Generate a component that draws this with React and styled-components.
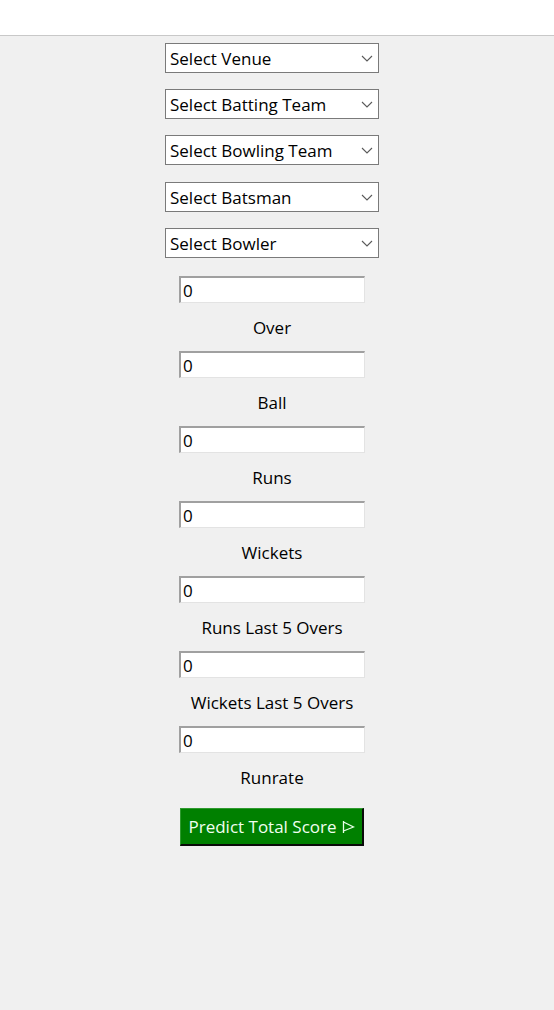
import styled, { createGlobalStyle } from "styled-components";

const GlobalStyle = createGlobalStyle`
  html, body {
    margin: 0;
    padding: 0;
    background: #f0f0f0;
  }
  body {
    font-family: "Open Sans", "Noto Sans", sans-serif;
    color: #000;
  }
`;

const Window = styled.div`
  width: 554px;
  height: 1010px;
  background: #f0f0f0;
  display: flex;
  flex-direction: column;
`;

const TitleBar = styled.div`
  height: 35px;
  background: #fff;
  border-bottom: 1px solid #c8c8c8;
`;

const Form = styled.div`
  display: flex;
  flex-direction: column;
  align-items: center;
  padding: 7px 10px 0 0;
`;

const Combo = styled.div`
  box-sizing: border-box;
  width: 214px;
  height: 30px;
  margin-bottom: ${(p) => (p.$wide ? 17 : 16)}px;
  background: #fff;
  border: 1px solid #7a7a7a;
  display: flex;
  align-items: center;
  justify-content: space-between;
  padding: 0 5px 0 4px;
  font-size: 17px;
  color: #000;
`;

const Entry = styled.div`
  box-sizing: border-box;
  width: 186px;
  height: 27px;
  background: #fff;
  border-top: 2px solid #a0a0a0;
  border-left: 2px solid #a0a0a0;
  border-right: 1px solid #e3e3e3;
  border-bottom: 1px solid #e3e3e3;
  display: flex;
  align-items: center;
  padding-left: 2px;
  font-size: 17px;
`;

const EntriesStart = styled.div`
  height: 2px;
`;

const Label = styled.div`
  height: 48px;
  display: flex;
  align-items: center;
  justify-content: center;
  font-size: 17px;
`;

const PredictButton = styled.button`
  box-sizing: border-box;
  margin-top: 7px;
  width: 184px;
  height: 38px;
  background: #008000;
  color: #f0fff0;
  border-top: 1px solid #2f9a2f;
  border-left: 1px solid #2f9a2f;
  border-right: 2px solid #0a0a0a;
  border-bottom: 2px solid #0a0a0a;
  font-family: "Open Sans", "Noto Sans", sans-serif;
  font-size: 17px;
  padding: 0;
  display: flex;
  align-items: center;
  justify-content: center;
  gap: 5px;
  cursor: pointer;
`;

const Chevron = () => (
  <svg width="12" height="7" viewBox="0 0 12 7">
    <path d="M1 1 L6 6 L11 1" fill="none" stroke="#5a5a5a" strokeWidth="1.1" />
  </svg>
);

const Flag = () => (
  <svg width="13" height="14" viewBox="0 0 13 14">
    <path d="M1.5 1 V13 M1.5 2 L11.5 7 L1.5 11" fill="none" stroke="#e8ffe8" strokeWidth="1.3" />
  </svg>
);

const selects = [
  "Select Venue",
  "Select Batting Team",
  "Select Bowling Team",
  "Select Batsman",
  "Select Bowler",
];

const fields = [
  "Over",
  "Ball",
  "Runs",
  "Wickets",
  "Runs Last 5 Overs",
  "Wickets Last 5 Overs",
  "Runrate",
];

export default function App() {
  return (
    <>
      <GlobalStyle />
      <Window>
        <TitleBar />
        <Form>
          {selects.map((s, i) => (
            <Combo key={s} $wide={i === 2}>
              <span>{s}</span>
              <Chevron />
            </Combo>
          ))}
          <EntriesStart />
          {fields.map((f) => (
            <div key={f}>
              <Entry>0</Entry>
              <Label>{f}</Label>
            </div>
          ))}
          <PredictButton>
            Predict Total Score <Flag />
          </PredictButton>
        </Form>
      </Window>
    </>
  );
}
